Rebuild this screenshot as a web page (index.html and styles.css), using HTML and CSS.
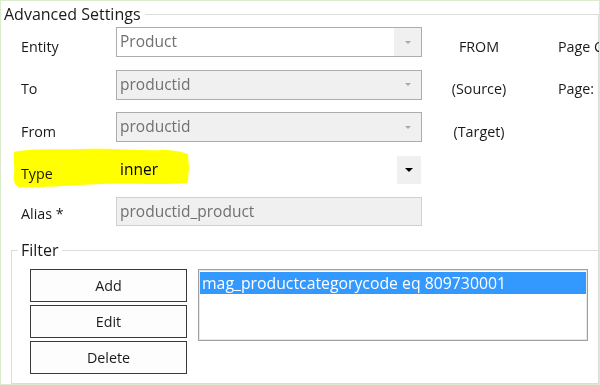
FILE: index.html
```html
<!DOCTYPE html>
<html lang="en">
<head>
    <meta charset="UTF-8">
    <title>Advanced Settings</title>
    <link rel="stylesheet" href="styles.css">
</head>
<body>
    <div class="window">
        <fieldset class="group advanced">
            <legend>Advanced Settings</legend>

            <!-- link fields -->
            <div class="form">
                <svg class="marker" width="178" height="42" viewBox="0 0 178 42">
                    <path d="M2,5 C20,1 45,3 70,2 C100,1 130,4 150,3 C162,3 170,5 176,7 L177,22 C176,28 177,33 175,36 C150,38 120,36 90,37 C60,38 30,41 6,40 C3,38 1,33 2,28 C3,20 1,12 2,5 Z" fill="#ffff00"/>
                </svg>

                <span class="label">Entity</span>
                <div class="combo combo-entity">
                    <span class="value">Product</span>
                    <span class="drop"><i class="arrow"></i></span>
                </div>
                <span class="note">FROM</span>
                <span class="side">Page C</span>

                <span class="label">To</span>
                <div class="combo">
                    <span class="value">productid</span>
                    <span class="drop"><i class="arrow"></i></span>
                </div>
                <span class="note">(Source)</span>
                <span class="side">Page:</span>

                <span class="label">From</span>
                <div class="combo">
                    <span class="value">productid</span>
                    <span class="drop"><i class="arrow"></i></span>
                </div>
                <span class="note">(Target)</span>
                <span class="side"></span>

                <span class="label">Type</span>
                <div class="combo combo-type">
                    <span class="value">inner</span>
                    <span class="drop"><i class="arrow"></i></span>
                </div>
                <span class="note"></span>
                <span class="side"></span>

                <span class="label label-alias">Alias *</span>
                <div class="textbox">productid_product</div>
            </div>

            <!-- filter -->
            <fieldset class="group filter">
                <legend>Filter</legend>
                <div class="filter-body">
                    <div class="buttons">
                        <button>Add</button>
                        <button>Edit</button>
                        <button>Delete</button>
                    </div>
                    <div class="list">
                        <div class="item selected">mag_productcategorycode eq 809730001</div>
                    </div>
                </div>
            </fieldset>
        </fieldset>
    </div>
</body>
</html>
```

FILE: styles.css
```css
body {
    margin: 0;
    background: #fff;
    font-family: "Open Sans", "Noto Sans", sans-serif;
    color: #1a1a1a;
}
.window {
    width: 600px;
    height: 385px;
    box-sizing: border-box;
    border: 1px solid #dbeccd;
    background: #fff;
    overflow: hidden;
    display: flex;
    flex-direction: column;
    white-space: nowrap;
}
.group {
    margin: 0;
    padding: 0;
    border: 1px solid #dcdcdc;
    min-width: 0;
}
.group legend {
    font-size: 16px;
    line-height: 26px;
    padding: 0 4px 0 2px;
    margin-left: 1px;
    color: #1a1a1a;
}
.advanced {
    flex: 1;
    border-left: none;
    border-bottom: none;
    display: flex;
    flex-direction: column;
}
.form {
    position: relative;
    display: grid;
    grid-template-columns: 95px 306px 114px 1fr;
    grid-template-rows: 30px 30px 30px 30px 29px;
    row-gap: 12.5px;
    padding-left: 20px;
}
.marker {
    position: absolute;
    left: 11px;
    top: 120px;
    mix-blend-mode: multiply;
}
.label, .note, .side {
    font-size: 14.3px;
    display: flex;
    align-items: center;
    padding-top: 8px;
}
.label-alias {
    padding-top: 3px;
}
.note {
    justify-content: center;
}
.side {
    padding-left: 22px;
}
.combo {
    display: flex;
    border: 1px solid #adadad;
    background: #f0f0f0;
    color: #707070;
    font-size: 15.5px;
}
.combo .value {
    flex: 1;
    padding-left: 3px;
    line-height: 27px;
}
.combo .drop {
    width: 27px;
    display: flex;
    align-items: center;
    justify-content: center;
    background: #f0f0f0;
}
.arrow {
    width: 0;
    height: 0;
    border-left: 3px solid transparent;
    border-right: 3px solid transparent;
    border-top: 3px solid #a8a8a8;
}
.combo-entity .value {
    background: #fff;
}
.combo-type {
    border-color: transparent;
    background: #fff;
    color: #000;
}
.combo-type .drop {
    width: 24px;
}
.combo-type .arrow {
    border-left-width: 4px;
    border-right-width: 4px;
    border-top: 4px solid #000;
}
.textbox {
    border: 1px solid #d0d0d0;
    background: #f0f0f0;
    color: #707070;
    font-size: 15.5px;
    line-height: 26px;
    padding-left: 3px;
}
.filter {
    flex: 1;
    margin: 13px -1px 0 10px;
}
.filter legend {
    line-height: 22px;
    padding: 0 3px;
    margin-left: 6px;
}
.filter-body {
    display: flex;
    gap: 11px;
    padding: 8px 8px 0 18px;
}
.buttons {
    display: flex;
    flex-direction: column;
    gap: 3px;
}
.buttons button {
    width: 157px;
    height: 33px;
    border: 1px solid #3a3a3a;
    background: #fdfdfd;
    font-family: "Open Sans", "Noto Sans", sans-serif;
    font-size: 14.3px;
    color: #1a1a1a;
    padding: 0;
}
.list {
    width: 390px;
    height: 72px;
    box-sizing: border-box;
    border: 1px solid #a0a0a0;
    box-shadow: inset 0 0 0 1px #e8e8e8;
    padding: 2px 1px;
}
.item {
    height: 22px;
    line-height: 22px;
    font-size: 15.8px;
    padding-left: 2px;
}
.selected {
    background: #3399ff;
    color: #fff;
}
```
